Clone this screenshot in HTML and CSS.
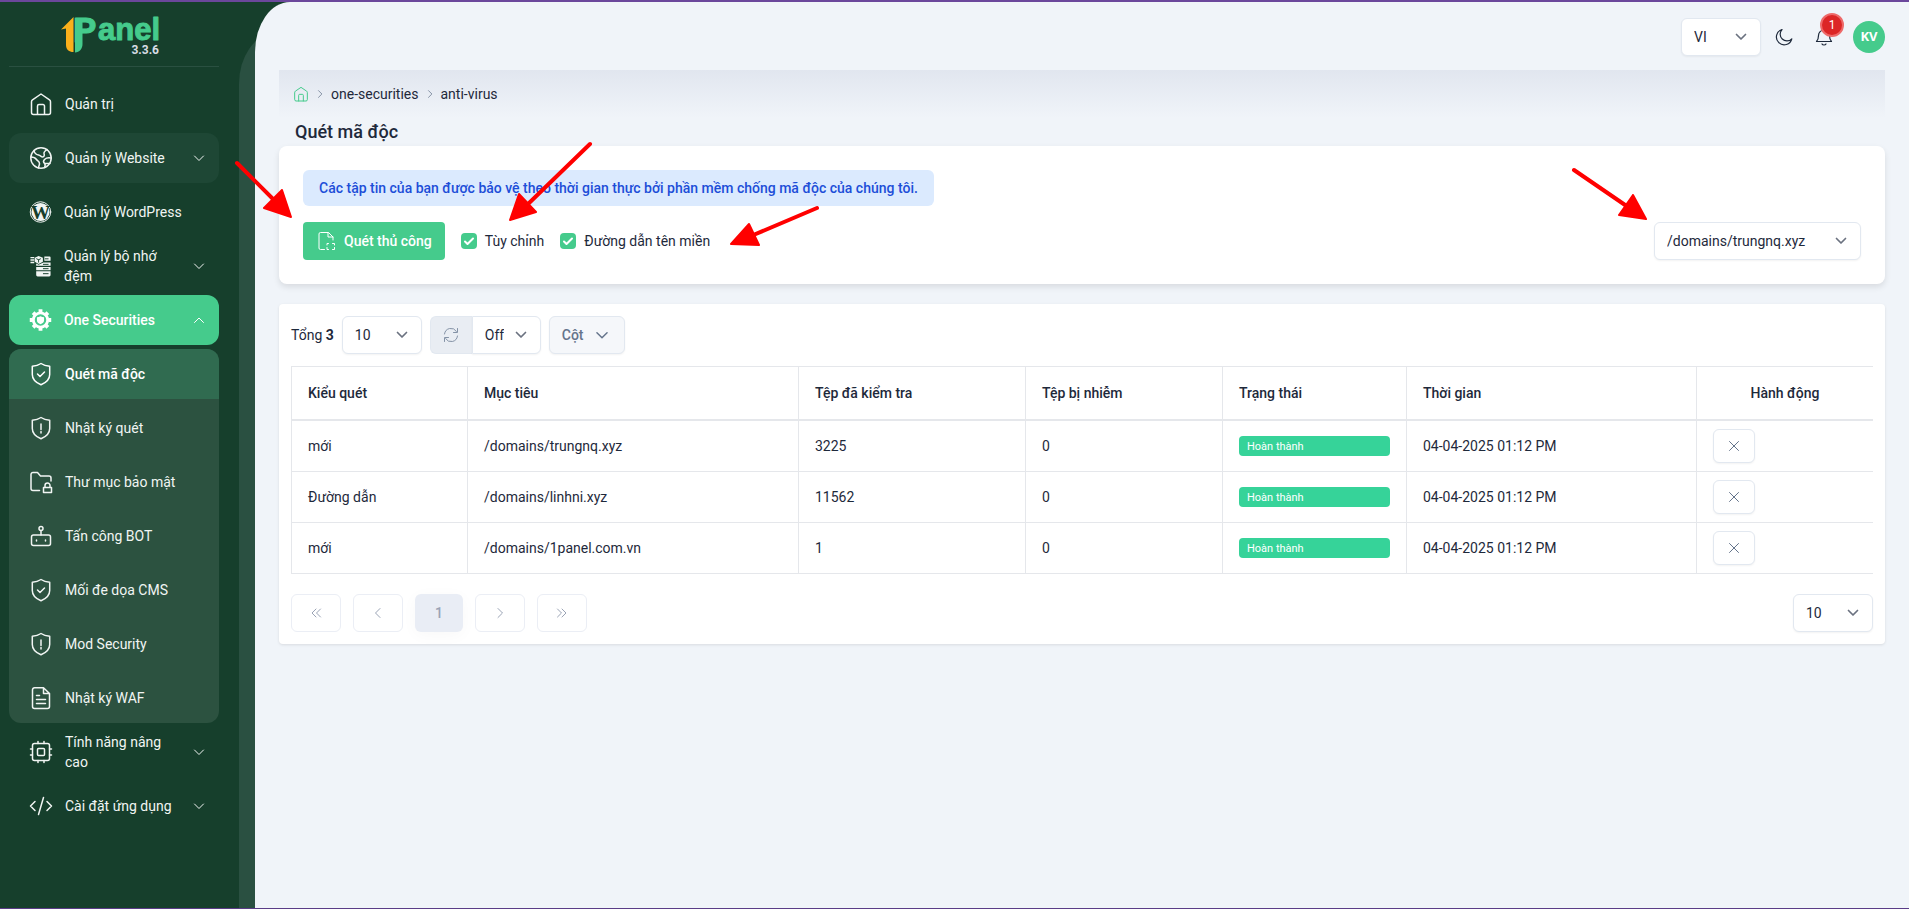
FILE: index.html
```
<!DOCTYPE html>
<html lang="vi">
<head>
    <meta charset="UTF-8">
    <meta name="viewport" content="width=device-width, initial-scale=1.0">
    <title>Quét mã độc - 1Panel</title>
    <link rel="stylesheet" href="styles.css">
</head>
<body>
    <!-- shared icons -->
    <svg class="sprite" aria-hidden="true">
        <symbol id="i-down" viewBox="0 0 16 16"><path d="M3.500 6l4.500 4.500L12.500 6"/></symbol>
        <symbol id="i-up" viewBox="0 0 16 16"><path d="M3.500 10.500L8 6l4.500 4.500"/></symbol>
        <symbol id="i-left" viewBox="0 0 16 16"><path d="M10 3.500L5.500 8l4.500 4.500"/></symbol>
        <symbol id="i-right" viewBox="0 0 16 16"><path d="M6 3.500L10.500 8 6 12.500"/></symbol>
        <symbol id="i-first" viewBox="0 0 16 16"><path d="M8 4L4 8l4 4M12.500 4l-4 4 4 4"/></symbol>
        <symbol id="i-last" viewBox="0 0 16 16"><path d="M8 4l4 4-4 4M3.500 4l4 4-4 4"/></symbol>
        <symbol id="i-close" viewBox="0 0 16 16"><path d="M3.500 3.500l9 9M12.500 3.500l-9 9"/></symbol>
        <symbol id="i-home" viewBox="0 0 24 24"><path d="M2.500 9.700c0-.8.400-1.500 1-1.900L12 2l8.500 5.800c.6.400 1 1.100 1 1.900v10.800a2 2 0 0 1-2 2h-15a2 2 0 0 1-2-2zM8.500 22.500V14a1.500 1.500 0 0 1 1.500-1.500h4a1.500 1.500 0 0 1 1.500 1.500v8.500"/></symbol>
        <symbol id="i-shield-ok" viewBox="0 0 24 24"><path d="M12 1.500c2.500 1.700 5.500 2.500 8.700 2.700v8.300c0 4.700-3.700 8.200-8.700 10.300-5-2.100-8.700-5.600-8.700-10.300V4.200C6.500 4 9.500 3.200 12 1.500zM8.500 12l2.500 2.500 4.500-4.500"/></symbol>
        <symbol id="i-shield-alert" viewBox="0 0 24 24"><path d="M12 1.500c2.500 1.700 5.500 2.500 8.700 2.700v8.300c0 4.700-3.700 8.200-8.700 10.300-5-2.100-8.700-5.600-8.700-10.300V4.200C6.500 4 9.500 3.200 12 1.500zM12 8v5.500M12 15.500v1.500"/></symbol>
    </svg>

    <div class="layout">
        <aside class="sidebar">
            <a class="logo" href="#" aria-label="1Panel">
                <svg class="logo-mark" viewBox="0 -10 102 48">
                    <path class="logo-one" d="M0 13.500L12.500 1v35C8 36 5 33.500 5 29V12.500z"/>
                    <path class="logo-stem" d="M14 2h7.500v26c0 5-3 8-7.500 8.500z"/>
                    <text class="logo-p" x="12" y="26">P</text>
                    <text class="logo-text" x="37" y="24">anel</text>
                </svg>
                <span class="version">3.3.6</span>
            </a>
            <nav class="nav">
                <a class="nav-item" href="#">
                    <svg class="nav-icon"><use href="#i-home"/></svg>
                    <span class="nav-label">Quản trị</span>
                </a>
                <a class="nav-item hovered" href="#">
                    <svg class="nav-icon" viewBox="0 0 24 24"><circle cx="12" cy="12" r="10.200"/><path d="M5 4.500c.5 3 2 4 4.500 4.500 2 .4 2.500 2 4 2 2 0 2-2 1.500-3.500s1-2.500 3-4M2 11c3 0 4.500 1 5.500 2.500 1 1.700 3 1.500 3 4 0 2-1 2.500-1 4.500M22 12c-2.500-.5-5 0-6.500 1.500s-1 3 0 4 .8 2.500 0 4M16 17.500h5"/></svg>
                    <span class="nav-label">Quản lý Website</span>
                    <svg class="nav-arrow"><use href="#i-down"/></svg>
                </a>
                <a class="nav-item" href="#">
                    <svg class="nav-icon solid" viewBox="0 0 24 24"><circle class="ring" cx="12" cy="12" r="10.700"/><circle cx="12" cy="12" r="9.500"/><text class="wp-mark" x="12" y="19">W</text></svg>
                    <span class="nav-label">Quản lý WordPress</span>
                </a>
                <a class="nav-item" href="#">
                    <svg class="nav-icon solid" viewBox="0 0 24 24">
                        <path d="M1.500 2.500h4V4h-4zM1.500 5h4v1.500h-4zM1.500 7.500h4V9h-4zM10 1.500l4.500 2v4L10 10 6 7.500v-4z"/>
                        <path d="M16 2h5.500a1 1 0 0 1 1 1v3.500H16zM7.500 9.500l2.500 1.300 5-2.500h7.500v3.500h-15zM7.500 13h15v3.500h-15zM7.500 17.500h15v4a1.500 1.500 0 0 1-1.500 1.500H9a1.500 1.500 0 0 1-1.500-1.500z"/>
                        <path class="cut" d="M10 5.500V8M8 4.500l2 1 2-1M17 4.500h3M15 10.300h5M15 14.800h5M15 20h5"/>
                    </svg>
                    <span class="nav-label">Quản lý bộ nhớ đệm</span>
                    <svg class="nav-arrow"><use href="#i-down"/></svg>
                </a>
                <a class="nav-item current" href="#">
                    <svg class="nav-icon solid" viewBox="0 0 24 24">
                        <circle class="gear" cx="12" cy="12" r="7.500"/>
                        <path class="teeth" d="M12 .8v3M12 20.200v3M.8 12h3M20.200 12h3M4.300 4.300l2 2M17.700 17.700l2 2M4.300 19.700l2-2M17.700 6.300l2-2"/>
                        <path d="M12 8c1.200.8 2.500 1.100 3.700 1.100v3.400c0 1.700-1.500 3-3.700 4-2.200-1-3.700-2.300-3.700-4V9.100C9.500 9.100 10.800 8.800 12 8z"/>
                    </svg>
                    <span class="nav-label">One Securities</span>
                    <svg class="nav-arrow"><use href="#i-up"/></svg>
                </a>
                <div class="subnav">
                    <a class="nav-item selected" href="#">
                        <svg class="nav-icon"><use href="#i-shield-ok"/></svg>
                        <span class="nav-label">Quét mã độc</span>
                    </a>
                    <a class="nav-item" href="#">
                        <svg class="nav-icon"><use href="#i-shield-alert"/></svg>
                        <span class="nav-label">Nhật ký quét</span>
                    </a>
                    <a class="nav-item" href="#">
                        <svg class="nav-icon" viewBox="0 0 24 24"><path d="M10.500 20.500H4a2 2 0 0 1-2-2V4.500a2 2 0 0 1 2-2h4.500L11.500 6H20a2 2 0 0 1 2 2v3M14.500 17.500h8v5h-8zM16 17.500v-2a2.500 2.500 0 0 1 5 0v2"/></svg>
                        <span class="nav-label">Thư mục bảo mật</span>
                    </a>
                    <a class="nav-item" href="#">
                        <svg class="nav-icon" viewBox="0 0 24 24"><rect x="2.500" y="11" width="19" height="10.500" rx="2"/><circle cx="12" cy="4.500" r="2"/><path d="M12 6.500V11M7.500 16v1M16.500 16v1"/></svg>
                        <span class="nav-label">Tấn công BOT</span>
                    </a>
                    <a class="nav-item" href="#">
                        <svg class="nav-icon"><use href="#i-shield-ok"/></svg>
                        <span class="nav-label">Mối đe dọa CMS</span>
                    </a>
                    <a class="nav-item" href="#">
                        <svg class="nav-icon"><use href="#i-shield-alert"/></svg>
                        <span class="nav-label">Mod Security</span>
                    </a>
                    <a class="nav-item" href="#">
                        <svg class="nav-icon" viewBox="0 0 24 24"><path d="M14.500 1.800H5.500a2 2 0 0 0-2 2v16.700a2 2 0 0 0 2 2h13a2 2 0 0 0 2-2V7.500zM14.500 1.800v5.700h6M7.500 9.500h3M7.500 13.500h9M7.500 17.500h9"/></svg>
                        <span class="nav-label">Nhật ký WAF</span>
                    </a>
                </div>
                <a class="nav-item" href="#">
                    <svg class="nav-icon" viewBox="0 0 24 24"><rect x="3.500" y="3.500" width="17" height="17" rx="2"/><rect x="8.500" y="8.500" width="7" height="7" rx="1"/><path d="M9 1.500v2M15 1.500v2M9 20.500v2M15 20.500v2M1.500 9h2M1.500 15h2M20.500 9h2M20.500 15h2"/></svg>
                    <span class="nav-label">Tính năng nâng cao</span>
                    <svg class="nav-arrow"><use href="#i-down"/></svg>
                </a>
                <a class="nav-item" href="#">
                    <svg class="nav-icon" viewBox="0 0 24 24"><path d="M6 7.500L1.500 12 6 16.500M18 7.500l4.500 4.500-4.500 4.500M14.500 3.500l-5 17"/></svg>
                    <span class="nav-label">Cài đặt ứng dụng</span>
                    <svg class="nav-arrow"><use href="#i-down"/></svg>
                </a>
            </nav>
        </aside>

        <main class="content">
            <header class="topbar">
                <select class="select lang" aria-label="Ngôn ngữ"><option>VI</option></select>
                <button class="icon-button" type="button" aria-label="Giao diện tối">
                    <svg viewBox="0 0 18 18"><path d="M7 1.500a7.800 7.800 0 1 0 9.800 9.300A6.500 6.500 0 0 1 7 1.500z"/></svg>
                </button>
                <button class="icon-button" type="button" aria-label="Thông báo">
                    <svg viewBox="0 0 18 18"><path d="M1.500 13.500h15c-1.500-1.500-2-2.500-2-6a5.500 5.500 0 0 0-11 0c0 3.500-.5 4.500-2 6zM7 16c.7 1.300 3.300 1.300 4 0"/></svg>
                    <span class="badge">1</span>
                </button>
                <button class="avatar" type="button">KV</button>
            </header>

            <nav class="breadcrumb">
                <a class="crumb-home" href="#" aria-label="Trang chủ"><svg><use href="#i-home"/></svg></a>
                <svg class="crumb-sep"><use href="#i-right"/></svg>
                <a href="#">one-securities</a>
                <svg class="crumb-sep"><use href="#i-right"/></svg>
                <a href="#">anti-virus</a>
            </nav>
            <h1 class="title">Quét mã độc</h1>

            <section class="card scan">
                <div class="alert">Các tập tin của bạn được bảo vệ theo thời gian thực bởi phần mềm chống mã độc của chúng tôi.</div>
                <div class="scan-row">
                    <button class="primary" type="button">
                        <svg viewBox="0 0 18 20"><path d="M6.500 18.500h-4a1.500 1.500 0 0 1-1.500-1.500V3a1.500 1.500 0 0 1 1.500-1.500h8L15 6v3M10 1.500V6h5M9 14v-1.500h1.500M14.500 12.500h2V14M9 16.500v2h1.500M14.500 18.500h2v-2"/></svg>
                        Quét thủ công
                    </button>
                    <label class="check"><input type="checkbox" checked>Tùy chỉnh</label>
                    <label class="check"><input type="checkbox" checked>Đường dẫn tên miền</label>
                    <select class="select domain" aria-label="Tên miền"><option>/domains/trungnq.xyz</option></select>
                </div>
            </section>

            <section class="card results">
                <div class="toolbar">
                    <span>Tổng <b>3</b></span>
                    <select class="select size" aria-label="Số dòng"><option>10</option></select>
                    <div class="group">
                        <button class="refresh" type="button" aria-label="Tải lại">
                            <svg viewBox="0 0 16 16"><path d="M1.500 7A6.500 6.500 0 0 1 13.500 4.500M14.500 9A6.500 6.500 0 0 1 2.500 11.500M14.500 1.500v4h-4M1.500 14.500v-4h4"/></svg>
                        </button>
                        <select class="select auto" aria-label="Tự động tải lại"><option>Off</option></select>
                    </div>
                    <button class="columns" type="button">Cột <svg><use href="#i-down"/></svg></button>
                </div>

                <table class="table">
                    <colgroup>
                        <col class="col-type"><col class="col-target"><col class="col-checked"><col class="col-infected"><col class="col-status"><col class="col-time"><col class="col-action">
                    </colgroup>
                    <thead>
                        <tr>
                            <th>Kiểu quét</th>
                            <th>Mục tiêu</th>
                            <th>Tệp đã kiểm tra</th>
                            <th>Tệp bị nhiễm</th>
                            <th>Trạng thái</th>
                            <th>Thời gian</th>
                            <th class="center">Hành động</th>
                        </tr>
                    </thead>
                    <tbody>
                        <tr>
                            <td>mới</td>
                            <td>/domains/trungnq.xyz</td>
                            <td>3225</td>
                            <td>0</td>
                            <td><div class="status">Hoàn thành</div></td>
                            <td>04-04-2025 01:12 PM</td>
                            <td><button class="remove" type="button" aria-label="Xóa"><svg><use href="#i-close"/></svg></button></td>
                        </tr>
                        <tr>
                            <td>Đường dẫn</td>
                            <td>/domains/linhni.xyz</td>
                            <td>11562</td>
                            <td>0</td>
                            <td><div class="status">Hoàn thành</div></td>
                            <td>04-04-2025 01:12 PM</td>
                            <td><button class="remove" type="button" aria-label="Xóa"><svg><use href="#i-close"/></svg></button></td>
                        </tr>
                        <tr>
                            <td>mới</td>
                            <td>/domains/1panel.com.vn</td>
                            <td>1</td>
                            <td>0</td>
                            <td><div class="status">Hoàn thành</div></td>
                            <td>04-04-2025 01:12 PM</td>
                            <td><button class="remove" type="button" aria-label="Xóa"><svg><use href="#i-close"/></svg></button></td>
                        </tr>
                    </tbody>
                </table>

                <div class="pager">
                    <button class="page" type="button" aria-label="Trang đầu"><svg><use href="#i-first"/></svg></button>
                    <button class="page" type="button" aria-label="Trang trước"><svg><use href="#i-left"/></svg></button>
                    <button class="page active" type="button">1</button>
                    <button class="page" type="button" aria-label="Trang sau"><svg><use href="#i-right"/></svg></button>
                    <button class="page" type="button" aria-label="Trang cuối"><svg><use href="#i-last"/></svg></button>
                    <select class="select size" aria-label="Số dòng mỗi trang"><option>10</option></select>
                </div>
            </section>
        </main>
    </div>

    <!-- guide arrows over the page -->
    <svg class="arrows" width="1700" height="300" viewBox="0 0 1700 300" aria-hidden="true">
        <path class="shaft" d="M237 163l38 38M590 144l-63 61M817 208l-66 28M1574 170l54 37"/>
        <path class="head" d="M291 217l-9-27-18 18zM510 220l9-26 17 18zM731 244l18-20 10 21zM1646 219l-13-24-14 20z"/>
    </svg>
</body>
</html>
```
FILE: styles.css
```
* {
    box-sizing: border-box;
}
body {
    margin: 0;
    font-family: Roboto, 'Liberation Sans', sans-serif;
    font-size: 14px;
    line-height: 20px;
    color: #1e293b;
    background: #163f2c;
}
a {
    color: inherit;
    text-decoration: none;
}
button, select, input {
    font: inherit;
    color: inherit;
    margin: 0;
}
button {
    cursor: pointer;
}
svg {
    fill: none;
    stroke: currentColor;
    stroke-linecap: round;
    stroke-linejoin: round;
    flex-shrink: 0;
}
.sprite {
    position: absolute;
    width: 0;
    height: 0;
}
.layout {
    display: flex;
    min-height: 100vh;
    border-top: 2px solid #6b479c;
    border-bottom: 1px solid #5a3c87;
}

/* sidebar */
.sidebar {
    width: 239px;
    flex-shrink: 0;
    padding: 0 20px 20px 9px;
    color: #f1f5f3;
}
.logo {
    display: flex;
    flex-direction: column;
    align-items: flex-end;
    height: 65px;
    padding: 4px 56px 0 0;
    border-bottom: 1px solid #2a5041;
}
.logo-mark {
    width: 102px;
    height: 48px;
    stroke: none;
}
.logo-one {
    fill: #fbb01b;
}
.logo-stem, .logo-p, .logo-text {
    fill: #45cb8c;
}
.logo-p, .logo-text {
    font-family: 'Liberation Sans', sans-serif;
    font-weight: bold;
    font-size: 31px;
    stroke: #45cb8c;
    stroke-width: 1px;
}
.logo-p {
    font-size: 35px;
}
.version {
    margin: -12px 4px 0 0;
    font-size: 12px;
    font-weight: 700;
    line-height: 16px;
    color: #d8dde5;
}
.nav {
    display: flex;
    flex-direction: column;
    gap: 4px;
    padding-top: 12px;
}
.nav-item {
    display: flex;
    align-items: center;
    gap: 12px;
    height: 50px;
    padding: 0 12px 0 20px;
    border-radius: 12px;
}
.nav-icon {
    width: 24px;
    height: 24px;
    stroke-width: 1.5px;
}
.nav-icon.solid {
    width: 23px;
    fill: currentColor;
    stroke: none;
}
.nav-icon .ring {
    fill: none;
    stroke: currentColor;
    stroke-width: 1px;
}
.wp-mark {
    font-family: 'Liberation Serif', serif;
    font-weight: bold;
    font-size: 20px;
    text-anchor: middle;
    fill: #163f2c;
}
.nav-icon .cut {
    fill: none;
    stroke: #163f2c;
    stroke-width: 1px;
}
.nav-icon .gear {
    fill: none;
    stroke: currentColor;
    stroke-width: 3px;
}
.nav-icon .teeth {
    stroke: currentColor;
    stroke-width: 4px;
    stroke-linecap: butt;
}
.nav-label {
    flex: 1;
}
.nav-arrow {
    width: 16px;
    height: 16px;
    stroke-width: 1px;
}
.hovered {
    background: #1e4735;
}
.current {
    color: #fff;
    font-weight: 500;
    background: #45cb8c;
}
.subnav {
    display: flex;
    flex-direction: column;
    gap: 4px;
    background: #2c5240;
    border-radius: 12px;
}
.selected {
    color: #fff;
    font-weight: 500;
    background: #306b50;
    border-radius: 12px 12px 0 0;
}

/* content */
.content {
    position: relative;
    z-index: 0;
    flex: 1;
    min-width: 0;
    margin-left: 16px;
    padding: 0 24px 24px;
    background: #f0f4f9;
    border-radius: 35px 0 0 0 / 50px 0 0 0;
}
/* darker sheet peeking out behind the content */
.content::before {
    content: '';
    position: absolute;
    z-index: -1;
    top: 32px;
    bottom: 0;
    left: -16px;
    width: 60px;
    background: #2a5041;
    border-radius: 35px 0 0 0 / 50px 0 0 0;
    clip-path: inset(0 44px 0 0);
}
.topbar {
    display: flex;
    align-items: center;
    justify-content: flex-end;
    height: 68px;
    padding-top: 2px;
}
.select {
    height: 38px;
    padding: 0 36px 0 12px;
    border: 1px solid #e2e8f0;
    border-radius: 6px;
    background: #fff url("data:image/svg+xml,%3Csvg xmlns='http://www.w3.org/2000/svg' width='12' height='8' fill='none' stroke='%236b7280' stroke-width='1.7' stroke-linecap='round' stroke-linejoin='round'%3E%3Cpath d='M1.500 1.500L6 6l4.500-4.500'/%3E%3C/svg%3E") no-repeat right 13px center;
    box-shadow: 0 1px 2px rgba(0, 0, 0, 0.05);
    appearance: none;
}
.lang {
    width: 80px;
    margin-right: 14px;
}
.icon-button {
    position: relative;
    display: flex;
    width: 18px;
    height: 18px;
    margin-right: 22px;
    padding: 0;
    border: 0;
    background: none;
}
.icon-button + .avatar {
    margin-left: -2px;
}
.icon-button svg {
    width: 18px;
    height: 18px;
    stroke-width: 1.2px;
}
.badge {
    position: absolute;
    top: -15px;
    right: -11px;
    width: 24px;
    height: 24px;
    border: 2px solid #ee6a6a;
    border-radius: 50%;
    font-size: 12px;
    line-height: 20px;
    text-align: center;
    color: #fff;
    background: #dc2626;
}
.avatar {
    width: 32px;
    height: 32px;
    padding: 0 0 2px;
    border: 0;
    border-radius: 50%;
    font-family: 'Open Sans', sans-serif;
    font-size: 13px;
    font-weight: 700;
    color: #fff;
    background: #45cb8c;
}
.breadcrumb {
    display: flex;
    align-items: center;
    gap: 5px;
    height: 48px;
    padding: 0 14px;
    background: linear-gradient(#e1e6ef, #f0f4f9);
}
.crumb-home {
    display: flex;
    color: #45cb8c;
}
.crumb-home svg {
    width: 16px;
    height: 16px;
    stroke-width: 1.5px;
}
.crumb-sep {
    width: 12px;
    height: 12px;
    color: #64748b;
}
.title {
    margin: 0;
    padding: 0 16px;
    font-size: 18px;
    font-weight: 500;
    line-height: 28px;
}
.card {
    background: #fff;
    border-radius: 8px;
    box-shadow: 0 3px 6px rgba(0, 0, 0, 0.1);
}
.scan {
    padding: 24px;
    margin-bottom: 20px;
}
.alert {
    width: fit-content;
    margin-bottom: 16px;
    padding: 8px 16px;
    border-radius: 6px;
    font-weight: 500;
    color: #1d4ed8;
    background: #dbeafe;
}
.scan-row {
    display: flex;
    align-items: center;
    gap: 16px;
}
.primary {
    display: flex;
    align-items: center;
    gap: 8px;
    height: 38px;
    padding: 0 13px 0 15px;
    border: 0;
    border-radius: 4px;
    font-weight: 500;
    color: #fff;
    background: #45cb8c;
}
.primary svg {
    width: 18px;
    height: 20px;
}
.check {
    display: flex;
    align-items: center;
    gap: 8px;
}
.check input {
    width: 16px;
    height: 16px;
    border-radius: 4px;
    background: #45cb8c url("data:image/svg+xml,%3Csvg xmlns='http://www.w3.org/2000/svg' width='16' height='16' fill='none' stroke='white' stroke-width='2' stroke-linecap='round' stroke-linejoin='round'%3E%3Cpath d='M4 8.500l2.500 2.500L12 5.500'/%3E%3C/svg%3E") center no-repeat;
    appearance: none;
}
.domain {
    width: 207px;
    margin-left: auto;
}
.results {
    padding: 12px;
    border-radius: 4px;
    box-shadow: 0 1px 3px rgba(0, 0, 0, 0.1);
}
.toolbar {
    display: flex;
    align-items: center;
    gap: 8px;
    margin-bottom: 12px;
}
.size {
    width: 80px;
}
.group {
    display: flex;
}
.refresh {
    display: flex;
    align-items: center;
    justify-content: center;
    width: 42px;
    padding: 0;
    border: 1px solid #e2e8f0;
    border-right: 0;
    border-radius: 6px 0 0 6px;
    color: #8492a6;
    background: #e9edf3;
}
.refresh svg {
    width: 16px;
    height: 16px;
}
.auto {
    width: 69px;
    border-radius: 0 6px 6px 0;
}
.columns {
    display: flex;
    align-items: center;
    gap: 9px;
    height: 38px;
    padding: 0 13px 0 12px;
    border: 1px solid #e2e8f0;
    border-radius: 6px;
    font-weight: 500;
    color: #64748b;
    background: #f5f7fa;
    box-shadow: 0 1px 2px rgba(0, 0, 0, 0.05);
}
.columns svg {
    width: 18px;
    height: 18px;
    stroke-width: 1.3px;
}

.table {
    width: 100%;
    table-layout: fixed;
    border-collapse: separate;
    border-spacing: 0;
    border-top: 1px solid #e5e7eb;
}
.col-type { width: 176px; }
.col-target { width: 331px; }
.col-checked { width: 227px; }
.col-infected { width: 197px; }
.col-status { width: 184px; }
.col-time { width: 290px; }
.col-action { width: 177px; }
.table th, .table td {
    padding: 8px 16px;
    border-left: 1px solid #e5e7eb;
    border-bottom: 1px solid #e5e7eb;
    text-align: left;
}
.table th {
    padding: 16px;
    border-bottom-width: 2px;
    font-weight: 500;
}
.table thead tr {
    height: 54px;
}
.table .center {
    text-align: center;
}
.status {
    height: 20px;
    padding: 1px 8px 0;
    border-radius: 4px;
    font-size: 11px;
    color: #fff;
    background: #36d399;
}
.remove {
    display: flex;
    align-items: center;
    justify-content: center;
    width: 42px;
    height: 34px;
    padding: 0;
    border: 1px solid #e2e8f0;
    border-radius: 6px;
    color: #64748b;
    background: #fff;
    box-shadow: 0 1px 2px rgba(0, 0, 0, 0.05);
}
.remove svg {
    width: 16px;
    height: 16px;
}
.pager {
    display: flex;
    gap: 12px;
    margin-top: 20px;
}
.pager .size {
    margin-left: auto;
}
.page {
    display: flex;
    align-items: center;
    justify-content: center;
    width: 50px;
    height: 38px;
    padding: 0;
    border: 1px solid #ebeef5;
    border-radius: 6px;
    color: #9aa3b5;
    background: #fff;
}
.page svg {
    width: 16px;
    height: 16px;
}
.page.active {
    width: 48px;
    border: 0;
    font-weight: 500;
    background: #e9edf5;
    box-shadow: 0 3px 16px rgba(0, 0, 0, 0.03);
}

.arrows {
    position: absolute;
    top: 0;
    left: 0;
    stroke: #f00;
    pointer-events: none;
}
.shaft {
    stroke-width: 4px;
}
.head {
    fill: #f00;
    stroke-width: 2px;
}
```
